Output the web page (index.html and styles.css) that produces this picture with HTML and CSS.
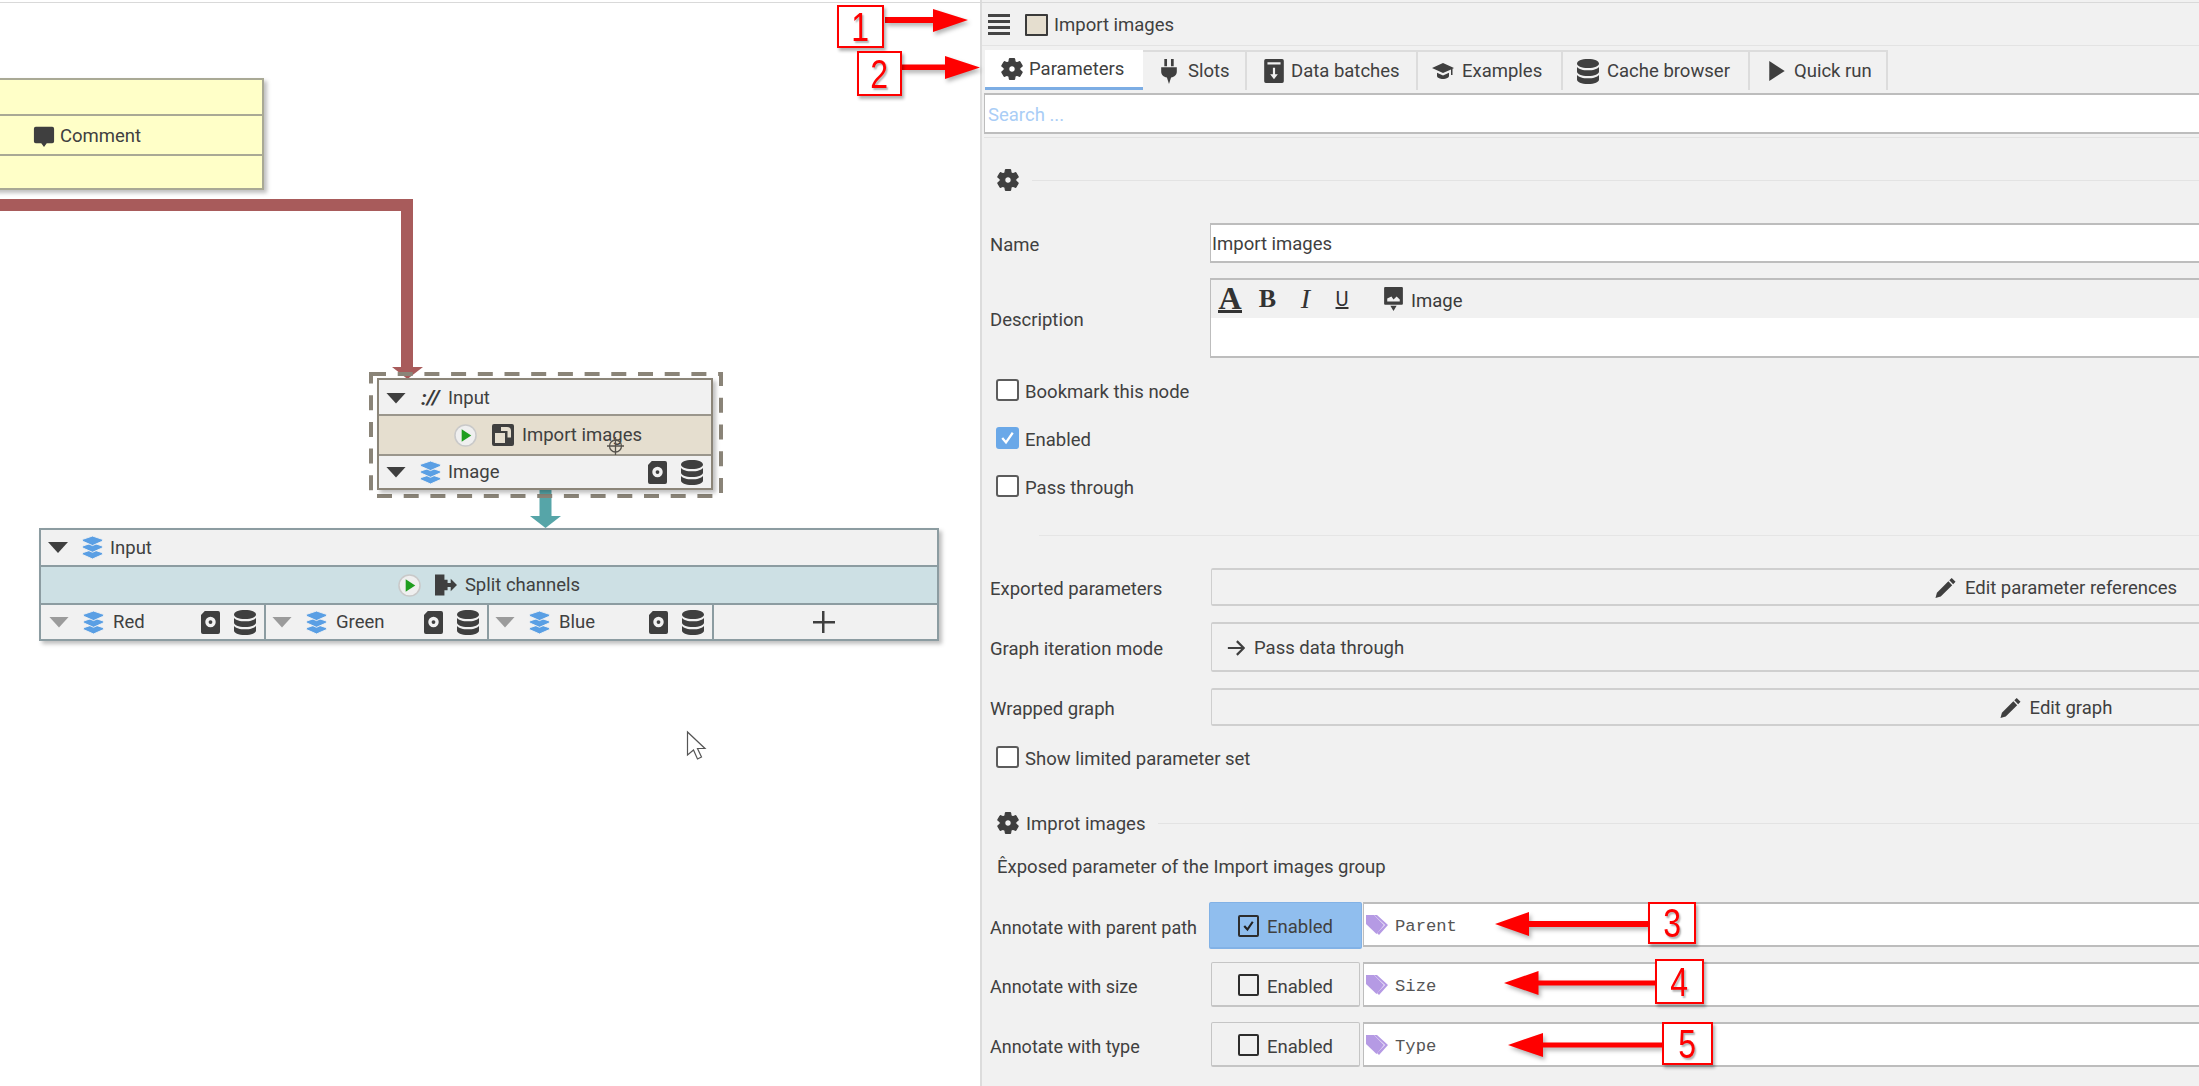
FILE: index.html
```html
<!DOCTYPE html>
<html lang="en">
<head>
<meta charset="utf-8">
<title>Import images</title>
<link rel="stylesheet" href="styles.css">
</head>
<body>
<svg class="defs" aria-hidden="true">
  <symbol id="gear" viewBox="2.200 1.800 19.600 20.400"><path stroke="currentColor" stroke-width="1.200" d="M19.140 12.940c.04-.3.06-.61.06-.94 0-.32-.02-.64-.07-.94l2.030-1.580a.49.49 0 0 0 .12-.61l-1.920-3.320a.488.488 0 0 0-.59-.22l-2.390.96c-.5-.38-1.030-.7-1.620-.94l-.36-2.540a.484.484 0 0 0-.48-.41h-3.840c-.24 0-.43.17-.47.41l-.36 2.540c-.59.24-1.130.57-1.620.94l-2.390-.96c-.22-.08-.47 0-.59.22L2.740 8.870c-.12.21-.08.47.12.61l2.030 1.580c-.05.3-.09.63-.09.94s.02.64.07.94l-2.030 1.580a.49.49 0 0 0-.12.61l1.920 3.320c.12.22.37.29.59.22l2.390-.96c.5.38 1.030.7 1.620.94l.36 2.540c.05.24.24.41.48.41h3.840c.24 0 .44-.17.47-.41l.36-2.540c.59-.24 1.130-.56 1.620-.94l2.390.96c.22.08.47 0 .59-.22l1.920-3.320c.12-.22.07-.47-.12-.61l-2.010-1.580zM12 15.100c-1.700 0-3.100-1.400-3.100-3.100s1.400-3.100 3.100-3.100 3.100 1.400 3.100 3.100-1.400 3.100-3.100 3.100z"/></symbol>
  <symbol id="plug" viewBox="4 0 16 24"><path d="M7.500 0h2.600v7H7.500zM13.900 0h2.600v7h-2.600zM4.500 8h15v4c0 3.200-2.200 5.300-5.500 5.800L12 24l-2-6.200C6.700 17.300 4.500 15.200 4.500 12z"/></symbol>
  <symbol id="batch" viewBox="3 1 18 22"><path fill-rule="evenodd" d="M4.500 1h15A1.500 1.500 0 0 1 21 2.500v19a1.500 1.500 0 0 1-1.500 1.500h-15A1.500 1.500 0 0 1 3 21.500v-19A1.500 1.500 0 0 1 4.500 1zM6 4v2h12V4zM11 9v6H8.500l3.500 4.500 3.500-4.500H13V9z"/></symbol>
  <symbol id="cap" viewBox="1 3 22 18"><path d="M12 4 1 9l11 5 8-3.600V16h1.500V9.700L23 9zM6 13.700V17c0 1.600 3 3 6 3s6-1.400 6-3v-3.300L12 16.400z"/></symbol>
  <symbol id="db" viewBox="3 1 18 22" preserveAspectRatio="none"><path d="M12 1C6.500 1 3 2.800 3 5s3.500 4 9 4 9-1.800 9-4-3.500-4-9-4zM3 8v4c0 2.200 3.500 4 9 4s9-1.800 9-4V8c-1.500 2-5 3-9 3S4.500 10 3 8zM3 15v4c0 2.200 3.500 4 9 4s9-1.800 9-4v-4c-1.500 2-5 3-9 3s-7.500-1-9-3z"/></symbol>
  <symbol id="run" viewBox="4 1 17 22"><path d="M4 1l17 11L4 23z"/></symbol>
  <symbol id="comment" viewBox="0 0 24 24"><path d="M3 2h18a2 2 0 0 1 2 2v14a2 2 0 0 1-2 2h-6l-3 4-3-4H3a2 2 0 0 1-2-2V4a2 2 0 0 1 2-2z"/></symbol>
  <symbol id="layers" viewBox="0 0 24 24"><g stroke="#f1f1f1" stroke-width="1"><path d="M12 14l9.500 3.200c1.300.5 1.300 2.100 0 2.600L12 24 2.500 19.800c-1.300-.5-1.300-2.100 0-2.600z"/><path d="M12 7l9.500 3.200c1.300.5 1.300 2.100 0 2.600L12 17 2.500 12.800c-1.300-.5-1.300-2.100 0-2.600z"/><path d="M12 0l9.500 3.200c1.300.5 1.300 2.100 0 2.600L12 10 2.500 5.800c-1.300-.5-1.300-2.100 0-2.600z"/></g></symbol>
  <symbol id="import" viewBox="1 1 22 22"><path fill-rule="evenodd" d="M3 1h18a2 2 0 0 1 2 2v18a2 2 0 0 1-2 2H3a2 2 0 0 1-2-2V3a2 2 0 0 1 2-2zM4 10v10h10V10zM10 4v4h6.500v6.500H20V8a4 4 0 0 0-4-4z"/></symbol>
  <symbol id="split" viewBox="2 2 21 20"><path d="M2 2h9v5h3v3h3V6l6 6-6 6v-4h-3v3h-3v5H2z"/></symbol>
  <symbol id="disk" viewBox="2 0 20 24"><path fill-rule="evenodd" d="M6 0h14a2 2 0 0 1 2 2v20a2 2 0 0 1-2 2H4a2 2 0 0 1-2-2V4zM12 6a5.500 5.500 0 1 0 0 11 5.500 5.500 0 0 0 0-11zM12 9.500a2 2 0 1 1 0 4 2 2 0 0 1 0-4z"/></symbol>
  <symbol id="pencil" viewBox="1 1 22 22"><path d="M18.500 1.500l4 4-2.500 2.500-4-4zM15 5l4 4L7 21l-5.500 1.500L3 17z"/></symbol>
  <symbol id="arrow" viewBox="1 2 21 20"><path fill="none" stroke="currentColor" stroke-width="2.600" d="M2 12h18M12.500 4l8 8-8 8"/></symbol>
  <symbol id="tag" viewBox="1 2 22 20"><path d="M9 2h3l11 10-9 10-2-2 8-8z"/><path d="M1 2h8l10 10-7.500 9L1 11z"/></symbol>
  <symbol id="pic" viewBox="3 0 18 23"><path fill-rule="evenodd" d="M4 0h16a1 1 0 0 1 1 1v15a1 1 0 0 1-1 1H4a1 1 0 0 1-1-1V1a1 1 0 0 1 1-1zM6 11v3h12v-2l-3-3-3 3-2-3zM9 18h6l-3 5z"/></symbol>
  <symbol id="play" viewBox="0 0 24 24"><circle cx="12" cy="12" r="11" fill="#efefef" stroke="#c9c9c9" stroke-width="1.600"/><path fill="#1f9e1f" d="M8 5.500l10 6.500-10 6.500z"/></symbol>
</svg>

<div class="app">
  <div class="topline"></div>

  <main class="canvas">
    <svg class="wires" width="980" height="1086">
      <path class="wire-red" d="M0 205H407V370"/>
      <path class="head-red" d="M392 367h31l-15.500 12z"/>
      <path class="wire-teal" d="M545.500 490V518"/>
      <path class="head-teal" d="M530 516h31l-15.500 12z"/>
      <rect class="selection" x="371" y="374" width="350" height="122"/>
    </svg>

    <section class="node node-comment">
      <div class="nrow"></div>
      <div class="nrow nrow-mid comment-title"><svg class="ic i22"><use href="#comment"/></svg><span>Comment</span></div>
      <div class="nrow"></div>
    </section>

    <section class="node node-import">
      <div class="nrow h34"><span class="tri"></span><span class="proto">://</span><span>Input</span></div>
      <div class="nrow h40 algo algo-import"><svg class="ic i23"><use href="#play"/></svg><svg class="ic i22 ml15"><use href="#import"/></svg><span class="ml8">Import images</span></div>
      <div class="nrow grow"><span class="tri"></span><svg class="ic i23 blue ml13"><use href="#layers"/></svg><span class="ml6">Image</span><span class="port-icons"><svg class="ic disk"><use href="#disk"/></svg><svg class="ic dbs"><use href="#db"/></svg></span></div>
    </section>

    <section class="node node-split">
      <div class="nrow h35"><span class="tri"></span><svg class="ic i23 blue ml13"><use href="#layers"/></svg><span class="ml6">Input</span></div>
      <div class="nrow h38 algo algo-split"><svg class="ic i23"><use href="#play"/></svg><svg class="ic i22 ml14"><use href="#split"/></svg><span class="ml8">Split channels</span></div>
      <div class="ports">
        <div class="port"><span class="tri tri-off"></span><svg class="ic i23 blue ml13"><use href="#layers"/></svg><span class="ml8">Red</span><span class="port-icons"><svg class="ic disk"><use href="#disk"/></svg><svg class="ic dbs"><use href="#db"/></svg></span></div>
        <div class="port"><span class="tri tri-off"></span><svg class="ic i23 blue ml13"><use href="#layers"/></svg><span class="ml8">Green</span><span class="port-icons"><svg class="ic disk"><use href="#disk"/></svg><svg class="ic dbs"><use href="#db"/></svg></span></div>
        <div class="port"><span class="tri tri-off"></span><svg class="ic i23 blue ml13"><use href="#layers"/></svg><span class="ml8">Blue</span><span class="port-icons"><svg class="ic disk"><use href="#disk"/></svg><svg class="ic dbs"><use href="#db"/></svg></span></div>
        <div class="port port-add"><span class="plus"></span></div>
      </div>
    </section>

    <svg class="cursors" width="980" height="1086">
      <g class="crosshair"><circle cx="615.500" cy="446" r="6"/><path d="M607 446h17M615.500 437v18"/></g>
      <path class="pointer" d="M687.500 732v23l6-5 4 9 4-2-4-8.500h7.500z"/>
    </svg>
  </main>

  <aside class="panel">
    <header class="panel-head">
      <span class="burger"><i></i><i></i><i></i><i></i></span>
      <span class="swatch"></span>
      <span>Import images</span>
    </header>

    <nav class="tabs">
      <div class="tab tab-active t1"><svg class="ic i22"><use href="#gear"/></svg><span>Parameters</span></div>
      <div class="tab t2"><svg class="ic plug"><use href="#plug"/></svg><span>Slots</span></div>
      <div class="tab t3"><svg class="ic batch"><use href="#batch"/></svg><span>Data batches</span></div>
      <div class="tab t4"><svg class="ic i22"><use href="#cap"/></svg><span>Examples</span></div>
      <div class="tab t5"><svg class="ic dbs"><use href="#db"/></svg><span>Cache browser</span></div>
      <div class="tab t6"><svg class="ic i18"><use href="#run"/></svg><span>Quick run</span></div>
    </nav>

    <div class="search">Search ...</div>
    <div class="rule"></div>

    <form class="form">
      <div class="section s-first"><svg class="ic i22"><use href="#gear"/></svg><span class="section-line"></span></div>

      <div class="row name-row"><span>Name</span><div class="input">Import images</div></div>

      <div class="row desc-row"><span>Description</span>
        <div class="editor">
          <div class="editor-bar">
            <span class="fmt fmt-a">A</span><span class="fmt fmt-b">B</span><span class="fmt fmt-i">I</span><span class="fmt fmt-u">U</span>
            <svg class="ic pic-ic"><use href="#pic"/></svg><span class="pic-label">Image</span>
          </div>
        </div>
      </div>

      <div class="check c-first"><span class="box"></span><span>Bookmark this node</span></div>
      <div class="check"><span class="box box-on"><svg viewBox="0 0 24 24"><path d="M5 12l5 6 9-13"/></svg></span><span>Enabled</span></div>
      <div class="check"><span class="box"></span><span>Pass through</span></div>

      <div class="divider"></div>

      <div class="row btn-row b-first"><span>Exported parameters</span><div class="btn btn-center"><svg class="ic i21"><use href="#pencil"/></svg><span>Edit parameter references</span></div></div>
      <div class="row combo-row"><span>Graph iteration mode</span><div class="btn"><svg class="ic i18"><use href="#arrow"/></svg><span>Pass data through</span></div></div>
      <div class="row btn-row"><span>Wrapped graph</span><div class="btn btn-center"><svg class="ic i21"><use href="#pencil"/></svg><span>Edit graph</span></div></div>

      <div class="check c-limited"><span class="box"></span><span>Show limited parameter set</span></div>

      <div class="section s-second"><svg class="ic i22"><use href="#gear"/></svg><span class="section-title">Improt images</span><span class="section-line"></span></div>
      <p class="note">Êxposed parameter of the Import images group</p>

      <div class="param p1"><span>Annotate with parent path</span>
        <div class="toggle toggle-on"><span class="tbox"><svg viewBox="0 0 24 24"><path d="M6 12l4.500 5L18 6"/></svg></span><span>Enabled</span></div>
        <div class="field"><svg class="ic i22 purple"><use href="#tag"/></svg><span>Parent</span></div>
      </div>
      <div class="param p2"><span>Annotate with size</span>
        <div class="toggle"><span class="tbox"></span><span>Enabled</span></div>
        <div class="field"><svg class="ic i22 purple"><use href="#tag"/></svg><span>Size</span></div>
      </div>
      <div class="param p3"><span>Annotate with type</span>
        <div class="toggle"><span class="tbox"></span><span>Enabled</span></div>
        <div class="field"><svg class="ic i22 purple"><use href="#tag"/></svg><span>Type</span></div>
      </div>
    </form>
  </aside>

  <svg class="callout-arrows" width="2199" height="1086">
    <path d="M885 17h48V9l35 11-35 12v-9h-48z"/>
    <path d="M902 64.500h43V56l35 11.500L945 79v-9h-43z"/>
    <path d="M1648 921h-119v-9l-34 12 34 12v-9h119z"/>
    <path d="M1655 980.500h-116.500V971l-34.500 12 34.500 12v-9.500H1655z"/>
    <path d="M1662 1042.500h-119V1033l-35 12 35 12v-9.500h119z"/>
  </svg>
  <div class="callout a1"><span class="digit">1</span></div>
  <div class="callout a2"><span class="digit">2</span></div>
  <div class="callout a3"><span class="digit">3</span></div>
  <div class="callout a4"><span class="digit">4</span></div>
  <div class="callout a5"><span class="digit">5</span></div>
</div>
</body>
</html>
```

FILE: styles.css
```css
* { box-sizing: border-box; }
html, body { margin: 0; padding: 0; background: #fff; }
body { font-family: Roboto, "Liberation Sans", sans-serif; font-size: 18.5px; color: #404040; }
.defs { position: absolute; width: 0; height: 0; }

.app { position: relative; display: flex; width: 2199px; height: 1086px; overflow: hidden; }
.topline { position: absolute; left: 0; right: 0; top: 2px; height: 1px; background: #d9d9d9; z-index: 3; }

.ic { display: block; flex: none; fill: currentColor; color: #3f3f3f; }
.i18 { width: 18px; height: 20px; }
.i21 { width: 21px; height: 22px; }
.i22 { width: 22px; height: 22px; }
.i23 { width: 23px; height: 23px; }
.disk { width: 19px; height: 23px; }
.dbs { width: 22px; height: 25px; }
.plug { width: 18px; height: 25px; }
.batch { width: 20px; height: 24px; }
.blue { color: #5a9fe4; }
.purple { color: #b59ae4; }
.ml6 { margin-left: 6px; }
.ml8 { margin-left: 8px; }
.ml13 { margin-left: 13px; }
.ml14 { margin-left: 14px; }
.ml15 { margin-left: 15px; }

/* canvas */
.canvas { position: relative; flex: none; width: 980px; height: 1086px; background: #fff; }
.wires, .cursors { position: absolute; left: 0; top: 0; }
.cursors { pointer-events: none; }
.wire-red { fill: none; stroke: #a85b5b; stroke-width: 12px; }
.head-red { fill: #a85b5b; }
.wire-teal { fill: none; stroke: #56a5a8; stroke-width: 12px; }
.head-teal { fill: #56a5a8; }
.selection { fill: none; stroke: #8a8478; stroke-width: 4px; stroke-dasharray: 15 11.700; }
.crosshair { fill: none; stroke: #55524c; stroke-width: 1.300px; }
.pointer { fill: #fff; stroke: #555; stroke-width: 1.200px; }

.node { position: absolute; display: flex; flex-direction: column; background: #f1f1f1; border: 2px solid #8f8f8f; box-shadow: 3px 3px 4px rgba(0,0,0,.25); }
.nrow { display: flex; align-items: center; padding-left: 7px; }
.nrow + .nrow { border-top: 2px solid #9a968c; }
.h34 { height: 34px; padding-top: 2px; }
.h35 { height: 35px; }
.h38 { height: 38px; }
.h40 { height: 40px; }
.grow { flex: 1; }
.algo { justify-content: center; padding-left: 0; }

.node-comment { left: -10px; top: 78px; width: 274px; height: 112px; background: #ffffc8; border-color: #a9a995; }
.node-comment .nrow { height: 34px; border-color: #a9a995; }
.node-comment .nrow-mid { height: 41px; padding: 2px 0 0 41px; gap: 5px; }

.node-import { left: 377px; top: 378px; width: 336px; height: 112px; border-color: #8b8579; }
.algo-import { background: #e5decf; padding-left: 6px; }
.node-split { left: 39px; top: 528px; width: 900px; height: 113px; border-color: #8c9ca1; }
.node-split .nrow + .nrow, .node-split .ports { border-top: 2px solid #8c9ca1; }
.algo-split { background: #cde0e4; }

.tri { flex: none; width: 20px; height: 11px; background: #3f3f3f; clip-path: polygon(0 0, 100% 0, 50% 100%); }
.tri-off { background: #9b9b9b; }
.proto { margin-left: 15px; width: 27px; font-size: 21px; font-weight: 700; font-style: italic; color: #3a3a3a; }
.port-icons { display: flex; align-items: center; gap: 14px; margin-left: auto; padding-right: 8px; }

.ports { display: grid; grid-template-columns: 223px 223px 225px 1fr; flex: 1; }
.port { display: flex; align-items: center; padding-left: 8px; }
.port + .port { border-left: 2px solid #8c9ca1; padding-left: 6px; }
.port-add { justify-content: center; padding: 0 10px 0 0; }
.plus { width: 22px; height: 22px; background: linear-gradient(#3f3f3f,#3f3f3f) center / 100% 2.500px no-repeat, linear-gradient(#3f3f3f,#3f3f3f) center / 2.500px 100% no-repeat; }

/* panel */
.panel { flex: none; width: 1219px; height: 1086px; background: #f1f1f1; border-left: 2px solid #dcdcdc; overflow: hidden; }
.panel-head { display: flex; align-items: center; height: 46px; padding: 4px 0 0 6px; border-bottom: 1px solid #e3e3e3; }
.burger { display: flex; flex-direction: column; justify-content: space-between; width: 22px; height: 21px; }
.burger i { display: block; height: 3px; background: #444; }
.swatch { width: 23px; height: 22px; margin: 0 6px 0 15px; background: #e5decf; border: 2px solid #3a3a3a; border-radius: 1px; }

.tabs { display: flex; height: 44px; padding: 4px 0 0 3px; }
.tab { display: flex; align-items: center; height: 40px; border: solid #dcdcdc; border-width: 2px 2px 0 0; }
.tab-active { background: #fff; border: 0; border-bottom: 3px solid #7cade4; }
.t1 { width: 158px; padding-left: 16px; gap: 6px; }
.t2 { width: 104px; padding-left: 17px; gap: 10px; }
.t3 { width: 171px; padding-left: 17px; gap: 7px; }
.t4 { width: 145px; padding-left: 14px; gap: 8px; }
.t5 { width: 187px; padding-left: 14px; gap: 8px; }
.t6 { width: 138px; padding-left: 18px; gap: 8px; }

.search { display: flex; align-items: center; height: 41px; width: 1300px; margin: 3px 0 0 2px; padding: 2px 0 0 3px; background: #fff; border: solid #bdbdbd; border-width: 2px 1px; color: #a9cdf6; }
.rule { height: 1px; margin: 3px 0 0 2px; background: #e2e2e2; }

.form { width: 1910px; margin-left: 8px; }
.section { display: flex; align-items: center; height: 24px; padding-left: 7px; }
.section-line { flex: 1; height: 1px; background: #e3e3e3; margin-left: 13px; }
.section-title { padding-top: 2px; }
.s-first { margin-top: 30px; }
.s-second { margin-top: 42px; }
.s-second .ic { margin-right: 7px; }
.note { display: flex; align-items: center; height: 24px; margin: 20px 0 0 7px; }

.row { display: grid; grid-template-columns: 220px 1fr; align-items: center; }
.row > span { padding-top: 3px; }
.name-row { margin-top: 31px; height: 40px; }
.input { display: flex; align-items: center; height: 40px; padding: 2px 0 0 1px; background: #fff; border: solid #bdbdbd; border-width: 2px 0 2px 1px; }
.desc-row { margin-top: 15px; height: 80px; }
.editor { height: 80px; background: #fff; border: solid #bdbdbd; border-width: 2px 0 2px 1px; }
.editor-bar { display: flex; align-items: center; height: 38px; background: #f1f1f1; color: #3a3a3a; padding-left: 7px; }
.fmt { display: block; flex: none; font-family: "Liberation Serif", serif; color: #333; text-align: center; }
.fmt-a { width: 24px; font-size: 32px; line-height: 24px; font-weight: 700; border-bottom: 3px solid #333; }
.fmt-b { width: 19px; margin-left: 16px; font-size: 26px; font-weight: 700; }
.fmt-i { width: 17px; margin-left: 20px; font-size: 28px; font-style: italic; }
.fmt-u { width: 18px; margin-left: 19px; font-family: Roboto, sans-serif; font-size: 20px; text-decoration: underline; }
.pic-ic { width: 19px; height: 24px; margin-left: 33px; }
.pic-label { margin-left: 8px; padding-top: 3px; }

.check { display: flex; align-items: center; gap: 6px; height: 24px; margin: 24px 0 0 6px; }
.check > span:last-child { padding-top: 3px; }
.c-first { margin-top: 20px; }
.c-limited { margin-top: 19px; }
.box { display: block; width: 23px; height: 22px; background: #fff; border: 2px solid #5c5c5c; border-radius: 3px; }
.box-on { background: #6aa8e8; border-color: #6aa8e8; }
.box svg, .tbox svg { display: block; width: 100%; height: 100%; fill: none; stroke-width: 3px; }
.box-on svg { stroke: #fff; }

.divider { height: 1px; margin: 37px 0 0 49px; background: #e5e5e5; }

.btn { display: flex; align-items: center; gap: 9px; height: 100%; margin-left: 1px; padding: 2px 0 0 15px; border: 1px solid #cfcfcf; border-width: 2px 0 2px 1px; border-radius: 2px; }
.btn-center { justify-content: center; padding-left: 0; gap: 9px; }
.btn-row { height: 38px; margin-top: 16px; }
.b-first { margin-top: 32px; }
.combo-row { height: 50px; margin-top: 16px; }

.param { display: grid; grid-template-columns: 219px 153px 1fr; }
.param > span { align-self: center; font-size: 18px; padding-top: 3px; }
.p1 { height: 47px; margin-top: 23px; }
.p2 { height: 45px; margin-top: 13px; }
.p3 { height: 45px; margin-top: 15px; }
.p2 > span, .p3 > span { padding-top: 4px; }
.toggle { display: flex; align-items: center; justify-content: center; gap: 8px; margin: 0 2px; padding-top: 1px; background: #f1f1f1; border: 1px solid #c5c5c5; border-bottom-width: 2px; border-radius: 2px; }
.toggle > span:last-child { padding-top: 3px; }
.p2 .toggle > span:last-child, .p3 .toggle > span:last-child { padding-top: 5px; }
.toggle-on { margin: 0; background: #90beee; border-color: #82b2e6; }
.tbox { display: block; width: 21px; height: 22px; border: 2px solid #2d2d2d; border-radius: 2px; }
.tbox svg { stroke: #222; }
.field { display: flex; align-items: center; height: 45px; margin-left: 1px; padding-left: 2px; gap: 7px; background: #fff; border: solid #bdbdbd; border-width: 2px 0 2px 1px; font-family: "Liberation Mono", monospace; font-size: 17.200px; color: #555; }
.field > span { padding-top: 3px; }

/* callouts */
.callout-arrows { position: absolute; left: 0; top: 0; fill: #f00; filter: drop-shadow(2px 3px 2px rgba(0,0,0,.3)); pointer-events: none; }
.callout { position: absolute; display: flex; align-items: center; justify-content: center; background: #fff; border: 2px solid #f00; box-shadow: 2px 3px 3px rgba(0,0,0,.3); font-family: "Liberation Sans", sans-serif; font-size: 40px; line-height: 1; color: #f00; text-shadow: 2px 2px 2px rgba(0,0,0,.3); }
.digit { display: block; transform: scaleX(.8); }
.a1 { left: 837px; top: 5px; width: 47px; height: 43px; }
.a2 { left: 857px; top: 51px; width: 45px; height: 45px; }
.a3 { left: 1648px; top: 902px; width: 48px; height: 42px; }
.a4 { left: 1655px; top: 959px; width: 49px; height: 45px; }
.a5 { left: 1662px; top: 1022px; width: 51px; height: 43px; }
```
